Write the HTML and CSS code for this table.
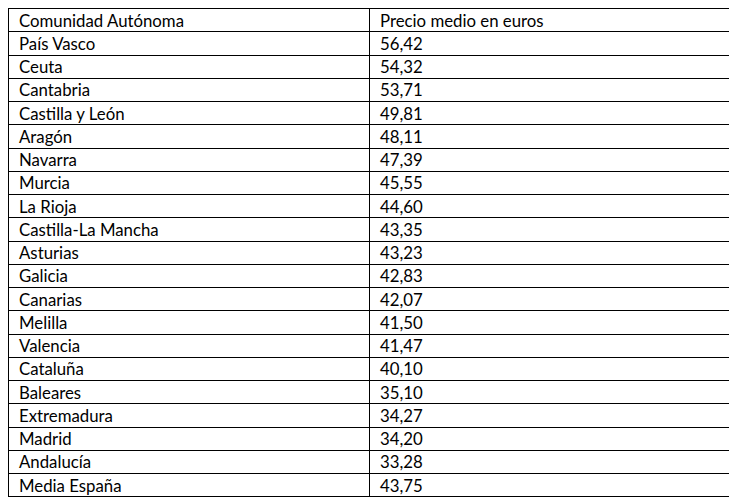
FILE: index.html
```html
<!DOCTYPE html>
<html lang="es">
<head>
<meta charset="utf-8">
<link rel="stylesheet" href="styles.css">
</head>
<body>
<table class="precios">
<colgroup><col class="c1"><col class="c2"></colgroup>
<tr><td>Comunidad Autónoma</td><td>Precio medio en euros</td></tr>
<tr><td>País Vasco</td><td>56,42</td></tr>
<tr><td>Ceuta</td><td>54,32</td></tr>
<tr><td>Cantabria</td><td>53,71</td></tr>
<tr><td>Castilla y León</td><td>49,81</td></tr>
<tr><td>Aragón</td><td>48,11</td></tr>
<tr><td>Navarra</td><td>47,39</td></tr>
<tr><td>Murcia</td><td>45,55</td></tr>
<tr><td>La Rioja</td><td>44,60</td></tr>
<tr><td>Castilla-La Mancha</td><td>43,35</td></tr>
<tr><td>Asturias</td><td>43,23</td></tr>
<tr><td>Galicia</td><td>42,83</td></tr>
<tr><td>Canarias</td><td>42,07</td></tr>
<tr><td>Melilla</td><td>41,50</td></tr>
<tr><td>Valencia</td><td>41,47</td></tr>
<tr><td>Cataluña</td><td>40,10</td></tr>
<tr><td>Baleares</td><td>35,10</td></tr>
<tr><td>Extremadura</td><td>34,27</td></tr>
<tr><td>Madrid</td><td>34,20</td></tr>
<tr><td>Andalucía</td><td>33,28</td></tr>
<tr><td>Media España</td><td>43,75</td></tr>
</table>
</body>
</html>
```
FILE: styles.css
```css
html, body { background: #fff; }
body { margin: 8px; }
.precios {
  border-collapse: collapse;
  width: 721px;
  table-layout: fixed;
  font-family: Lato, "Open Sans", sans-serif;
  font-size: 16.8px;
  color: #000;
}
.c1 { width: 361px; }
.c2 { width: 360px; }
.precios tr { height: 23.25px; }
.precios td {
  border: 1px solid #000;
  padding: 1px 0 0 10px;
  line-height: 20px;
  vertical-align: middle;
  white-space: nowrap;
}
```
